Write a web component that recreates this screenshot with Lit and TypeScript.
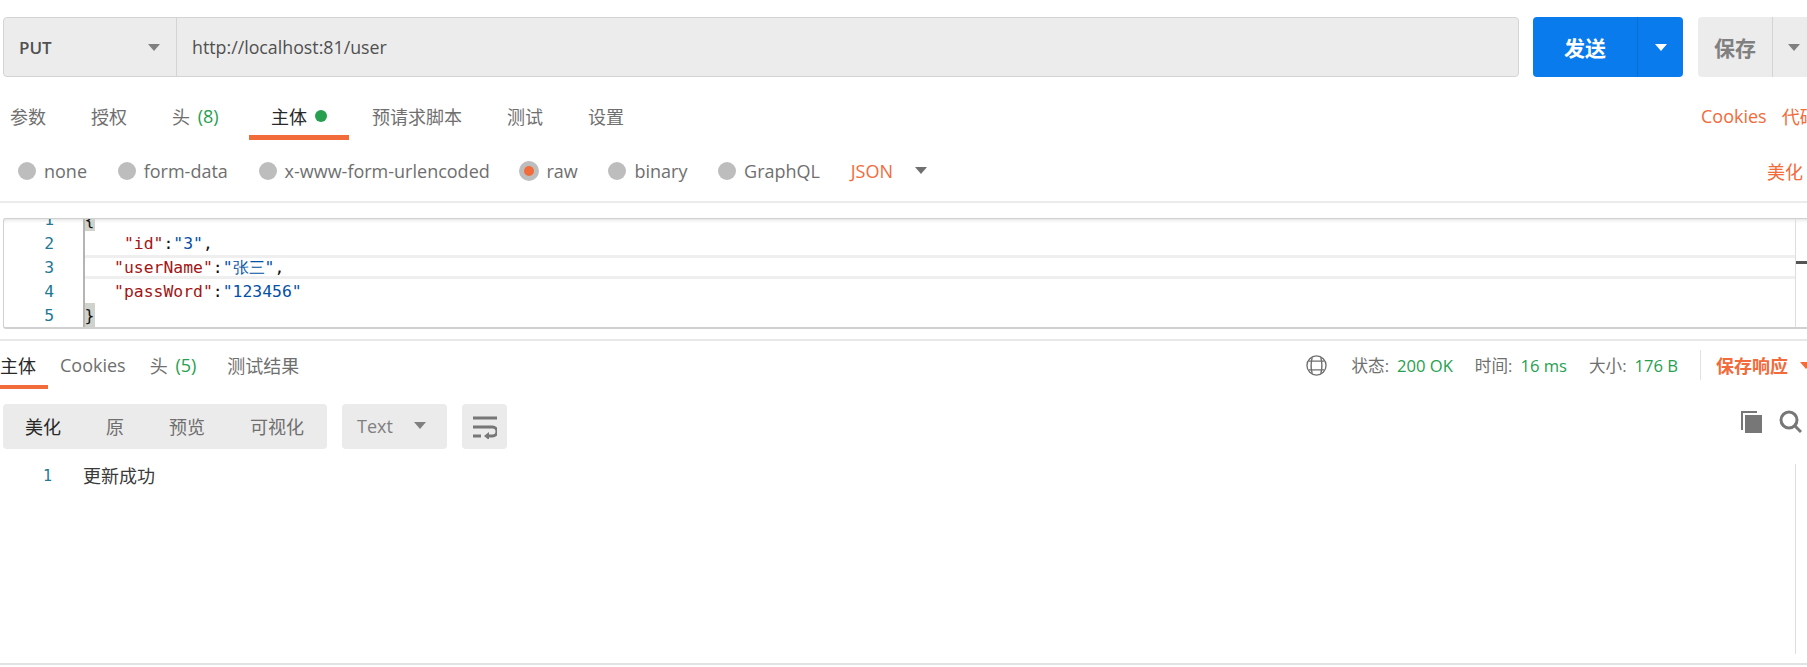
import { LitElement, html, css } from "lit";
import { customElement } from "lit/decorators.js";

const caret = () => html`<svg class="caret" viewBox="0 0 12 7"><path d="M0 0h12L6 7z" fill="currentColor"/></svg>`;

@customElement("app-root")
export class AppRoot extends LitElement {
  static styles = css`
    :host { display: block; width: 1807px; height: 667px; overflow: hidden; background: #fff; font-family: "Open Sans", "Noto Sans CJK SC", sans-serif; font-size: 18px; color: #6f6f6f; }
    .page { display: flex; flex-direction: column; height: 667px; }
    .green { color: #26a04f; }
    .orange { color: #f26b3a; }
    .caret { width: 12px; height: 7px; display: block; flex: none; }

    .top { display: flex; height: 60px; margin-top: 17px; padding-left: 3px; }
    .url { flex: none; width: 1516px; box-sizing: border-box; display: flex; background: #ececec; border: 1px solid #d4d4d4; border-radius: 4px; }
    .method { width: 173px; box-sizing: border-box; display: flex; align-items: center; justify-content: space-between; padding: 0 16px 0 15px; border-right: 1px solid #d4d4d4; font-weight: 600; color: #505050; font-size: 17px; }
    .method .caret { color: #808080; }
    .addr { padding-left: 15px; display: flex; align-items: center; color: #505050; font-size: 17.8px; }
    .send { flex: none; margin-left: 14px; width: 150px; display: flex; background: #097bed; color: #fff; border-radius: 4px; font-weight: 700; }
    .send .lab { width: 104px; display: flex; align-items: center; justify-content: center; font-size: 21px; border-right: 1px solid #0a6fd4; }
    .send .more { flex: 1; display: flex; align-items: center; justify-content: center; }
    .save { flex: none; margin-left: 15px; width: 200px; display: flex; background: #ececec; color: #808080; border-radius: 4px; font-weight: 700; }
    .save .lab { width: 74px; display: flex; align-items: center; justify-content: center; font-size: 21px; border-right: 1px solid #d4d4d4; }
    .save .more { padding-left: 15px; display: flex; align-items: center; }

    .tabs { display: flex; height: 63px; margin-left: -12px; box-sizing: border-box; }
    .tab { padding: 21px 22px 6px; height: 63px; box-sizing: border-box; display: flex; align-items: center; margin-right: 1px; white-space: pre; flex: none; }
    .tab.hd { width: 98px; }
    .tab.on { color: #282828; gap: 8px; box-shadow: inset 0 -5px 0 #f26b3a; }
    .tab .green { margin-left: 3px; }
    .tabs .dot { width: 12px; height: 12px; border-radius: 50%; background: #26a04f; }
    .links { margin-left: auto; display: flex; gap: 15px; align-items: center; padding-top: 15px; margin-right: -4px; width: 110px; white-space: nowrap; overflow: hidden; flex: none; }

    .radios { display: flex; align-items: center; height: 61px; padding-left: 18px; border-bottom: 2px solid #ebebeb; flex: none; }
    .radio { display: flex; align-items: center; gap: 8px; margin-right: 30.7px; flex: none; }
    .radio i { width: 18px; height: 18px; border-radius: 50%; background: #bdbdbd; display: flex; align-items: center; justify-content: center; }
    .radio i.sel { width: 20px; height: 20px; margin: 0 -1px; }
    .radio i.sel::after { content: ""; width: 10px; height: 10px; border-radius: 50%; background: #f26b3a; }
    .json { display: flex; align-items: center; gap: 22px; }
    .json .caret { color: #707070; }
    .beaut { margin-left: auto; margin-right: 4px; }

    .editor { margin: 15px 0 0 3px; height: 111px; box-sizing: border-box; border: 1px solid #d0d0d0; border-width: 1px 0 2px 1px; border-radius: 3px 0 0 3px; display: flex; overflow: hidden; font-family: "DejaVu Sans Mono", monospace; font-size: 16.4px; box-shadow: inset 0 5px 5px -5px #00000030; flex: none; }
    .lines { flex: 1; margin-top: -12px; }
    .line { display: flex; height: 24px; line-height: 26px; }
    .num { width: 50px; flex: none; text-align: right; color: #237893; }
    .code { flex: 1; margin-left: 28.5px; border-left: 2px solid #b4b4b4; white-space: pre; color: #111; }
    .line.cur .code { box-shadow: inset 0 3px 0 #efefef, inset 0 -3px 0 #efefef; }
    .k { color: #a31515; }
    .v { color: #0451a5; }
    .b { background: #cfd3cc; display: inline-block; width: 10px; height: 24px; vertical-align: top; }
    .rul { width: 12px; box-sizing: border-box; flex: none; border-left: 1px solid #dedede; }
    .rul u { display: block; height: 3px; background: #555; margin-top: 42px; }

    .rule { margin-top: 10px; height: 2px; background: #e8e8e8; flex: none; }
    .rtabs { display: flex; height: 48px; align-items: stretch; flex: none; }
    .rtab { display: flex; align-items: center; margin-right: 24px; white-space: pre; flex: none; }
    .rtab .green { margin-left: 3px; }
    .rtab.on { color: #282828; width: 48px; margin-right: 12px; box-shadow: inset 0 -4px 0 #f26b3a; }
    .rtab.hd { margin-right: 31px; }
    .stats { margin-left: auto; display: flex; align-items: center; font-size: 16.6px; }
    .stats .globe { width: 21px; height: 21px; color: #6f6f6f; margin-right: 24px; flex: none; }
    .stats .lbl { margin-right: 8px; white-space: nowrap; }
    .stats .val { margin-right: 22px; white-space: nowrap; }
    .stats .sep { width: 1px; height: 30px; background: #e2e2e2; margin: 0 15px 0 0; }
    .stats .sv { font-size: 18px; font-weight: 700; color: #f26b3a; white-space: nowrap; width: 91px; overflow: hidden; display: flex; align-items: center; gap: 12px; flex: none; }

    .bar { display: flex; margin-top: 15px; height: 45px; padding-left: 3px; flex: none; }
    .seg { display: flex; width: 324px; background: #ebebeb; border-radius: 4px; align-items: center; padding: 0 0 2px 22px; box-sizing: border-box; flex: none; }
    .seg span { margin-right: 45px; white-space: nowrap; flex: none; }
    .seg span.on { color: #282828; }
    .fmt { margin-left: 15px; width: 105px; box-sizing: border-box; padding: 0 21px 2px 15px; background: #ebebeb; border-radius: 4px; display: flex; align-items: center; justify-content: space-between; color: #808080; flex: none; }
    .fmt .caret { color: #808080; }
    .wrapb { margin-left: 15px; width: 45px; background: #ebebeb; border-radius: 4px; display: flex; align-items: center; justify-content: center; flex: none; }
    .wrapb svg { width: 24px; height: 24px; color: #777; }
    .tools { margin-left: auto; display: flex; align-items: center; gap: 16px; margin-right: 5px; margin-top: -9px; color: #777; }
    .tools svg { width: 23px; height: 24px; display: block; }

    .resp { margin-top: 15px; display: flex; height: 24px; line-height: 24px; flex: none; }
    .resp .n { width: 52px; text-align: right; color: #237893; font-family: "DejaVu Sans Mono", monospace; font-size: 15px; }
    .resp .t { margin-left: 31px; color: #3a3a3a; flex: 1; }
    .resp .r { width: 12px; box-sizing: border-box; flex: none; border-left: 1px solid #dedede; height: 190px; }
    .foot { margin-top: auto; margin-bottom: 2px; height: 2px; background: #e2e2e2; flex: none; }
  `;

  render() {
    return html`<div class="page">
      <div class="top">
        <div class="url">
          <div class="method">PUT ${caret()}</div>
          <div class="addr">http://localhost:81/user</div>
        </div>
        <div class="send"><div class="lab">发送</div><div class="more">${caret()}</div></div>
        <div class="save"><div class="lab">保存</div><div class="more">${caret()}</div></div>
      </div>

      <div class="tabs">
        <div class="tab">参数</div>
        <div class="tab">授权</div>
        <div class="tab hd">头 <span class="green">(8)</span></div>
        <div class="tab on">主体<span class="dot"></span></div>
        <div class="tab">预请求脚本</div>
        <div class="tab">测试</div>
        <div class="tab">设置</div>
        <div class="links orange"><span>Cookies</span><span>代码</span></div>
      </div>

      <div class="radios">
        <div class="radio"><i></i>none</div>
        <div class="radio"><i></i>form-data</div>
        <div class="radio"><i></i>x-www-form-urlencoded</div>
        <div class="radio"><i class="sel"></i>raw</div>
        <div class="radio"><i></i>binary</div>
        <div class="radio"><i></i>GraphQL</div>
        <div class="json"><span class="orange">JSON</span>${caret()}</div>
        <div class="beaut orange">美化</div>
      </div>

      <div class="editor">
        <div class="lines">
          <div class="line"><div class="num">1</div><div class="code"><span class="b">{</span></div></div>
          <div class="line"><div class="num">2</div><div class="code">    <span class="k">"id"</span>:<span class="v">"3"</span>,</div></div>
          <div class="line cur"><div class="num">3</div><div class="code">   <span class="k">"userName"</span>:<span class="v">"张三"</span>,</div></div>
          <div class="line"><div class="num">4</div><div class="code">   <span class="k">"passWord"</span>:<span class="v">"123456"</span></div></div>
          <div class="line"><div class="num">5</div><div class="code"><span class="b">}</span></div></div>
        </div>
        <div class="rul"><u></u></div>
      </div>

      <div class="rule"></div>

      <div class="rtabs">
        <div class="rtab on">主体</div>
        <div class="rtab">Cookies</div>
        <div class="rtab hd">头 <span class="green">(5)</span></div>
        <div class="rtab">测试结果</div>
        <div class="stats">
          <svg class="globe" viewBox="0 0 22 22" fill="none" stroke="currentColor" stroke-width="1.4">
            <circle cx="11" cy="11" r="10"/>
            <path d="M6.5 2.5C5 8 5 14 6.5 19.5M15.5 2.5C17 8 17 14 15.5 19.5M3 6.5h16M3 15.5h16"/>
          </svg>
          <span class="lbl">状态:</span><span class="val green">200 OK</span>
          <span class="lbl">时间:</span><span class="val green">16 ms</span>
          <span class="lbl">大小:</span><span class="val green">176 B</span>
          <span class="sep"></span>
          <span class="sv">保存响应${caret()}</span>
        </div>
      </div>

      <div class="bar">
        <div class="seg"><span class="on">美化</span><span>原</span><span>预览</span><span>可视化</span></div>
        <div class="fmt">Text ${caret()}</div>
        <div class="wrapb">
          <svg viewBox="0 0 24 24" fill="none" stroke="currentColor" stroke-width="3">
            <path d="M0 3h24M0 12h19.5a4.5 4.5 0 0 1 0 9H15M0 21h8"/>
            <path d="M16 17v8l-5-4z" fill="currentColor" stroke="none"/>
          </svg>
        </div>
        <div class="tools">
          <svg viewBox="0 0 23 24"><path d="M1 1h16v2H3v17H1z" fill="currentColor"/><rect x="5" y="5" width="17" height="18" fill="currentColor"/></svg>
          <svg viewBox="0 0 23 24" fill="none" stroke="currentColor" stroke-width="3"><circle cx="10" cy="10" r="8"/><path d="M16 16l6 6"/></svg>
        </div>
      </div>

      <div class="resp">
        <div class="n">1</div>
        <div class="t">更新成功</div>
        <div class="r"></div>
      </div>
      <div class="foot"></div>
    </div>`;
  }
}
